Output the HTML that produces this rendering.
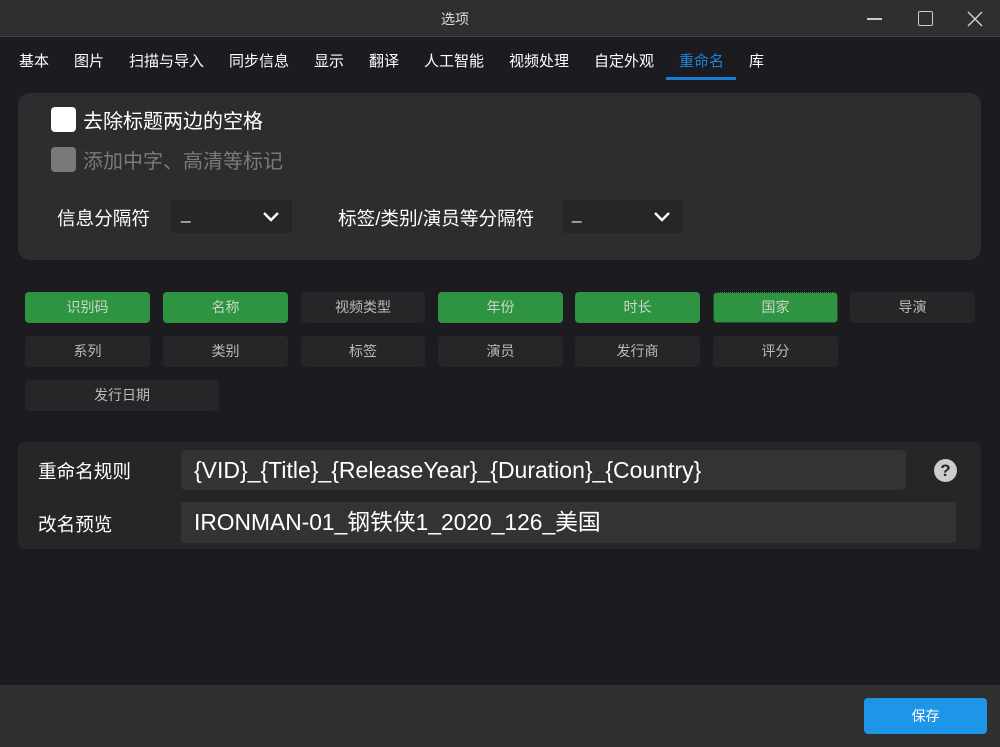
<!DOCTYPE html>
<html><head><meta charset="utf-8"><style>
*{margin:0;padding:0;box-sizing:border-box}
body{width:1000px;height:747px;background:#1c1b20;font-family:"Liberation Sans","Noto Sans CJK SC",sans-serif;color:#fff;position:relative;overflow:hidden}
.a{position:absolute}
.title{left:0;top:0;width:1000px;height:37px;background:#2f2f2f;border-bottom:1px solid #444}
.tab{top:50px;font-size:15px;color:#fff}
.btn{position:absolute;height:31px;border-radius:4px;background:#262628;color:#bbb;font-size:14px;text-align:center;line-height:31px}
.g{background:#2e9442;color:#c8d8c8}
.sel{background:#262628;height:33px;top:200px}
.chev{position:absolute;right:12px;top:11px}
</style></head><body>
<div class="a title"></div>
<div class="a" style="left:441px;top:9px;font-size:14px;color:#ddd">选项</div>
<div class="a" style="left:867px;top:18px;width:15px;height:1.5px;background:#ccc"></div>
<div class="a" style="left:918px;top:11px;width:15px;height:15px;border:1.5px solid #ccc;border-radius:2px"></div>
<svg class="a" style="left:966px;top:10px" width="18" height="18"><path d="M2 2L16 16M16 2L2 16" stroke="#ccc" stroke-width="1.5"/></svg>

<div class="a tab" style="left:19px">基本</div>
<div class="a tab" style="left:74px">图片</div>
<div class="a tab" style="left:129px">扫描与导入</div>
<div class="a tab" style="left:229px">同步信息</div>
<div class="a tab" style="left:314px">显示</div>
<div class="a tab" style="left:369px">翻译</div>
<div class="a tab" style="left:424px">人工智能</div>
<div class="a tab" style="left:509px">视频处理</div>
<div class="a tab" style="left:594px">自定外观</div>
<div class="a tab" style="left:679px;color:#1a86d9">重命名</div>
<div class="a tab" style="left:749px">库</div>
<div class="a" style="left:666px;top:77px;width:70px;height:3px;background:#1a7bd0"></div>

<div class="a" style="left:18px;top:93px;width:963px;height:167px;background:#2d2d30;border-radius:12px"></div>
<div class="a" style="left:51px;top:107px;width:25px;height:25px;background:#fff;border-radius:4px"></div>
<div class="a" style="left:83px;top:105px;font-size:20px">去除标题两边的空格</div>
<div class="a" style="left:51px;top:147px;width:25px;height:25px;background:#7a7a7a;border-radius:4px"></div>
<div class="a" style="left:83px;top:145px;font-size:20px;color:#7a7a7a">添加中字、高清等标记</div>
<div class="a" style="left:57px;top:204px;font-size:18.6px">信息分隔符</div>
<div class="a sel" style="left:171px;width:121px"><span class="a" style="left:10px;top:4px;font-size:17px">_</span><svg class="chev" width="18" height="12"><path d="M2 2L9 9L16 2" stroke="#fff" stroke-width="2.4" fill="none"/></svg></div>
<div class="a" style="left:338px;top:204px;font-size:18.6px">标签/类别/演员等分隔符</div>
<div class="a sel" style="left:562px;width:121px"><span class="a" style="left:10px;top:4px;font-size:17px">_</span><svg class="chev" width="18" height="12"><path d="M2 2L9 9L16 2" stroke="#fff" stroke-width="2.4" fill="none"/></svg></div>

<div class="btn g" style="left:25px;top:292px;width:125px">识别码</div>
<div class="btn g" style="left:163px;top:292px;width:125px">名称</div>
<div class="btn" style="left:301px;top:292px;width:124px">视频类型</div>
<div class="btn g" style="left:438px;top:292px;width:125px">年份</div>
<div class="btn g" style="left:575px;top:292px;width:125px">时长</div>
<div class="btn g" style="left:713px;top:292px;width:125px;border:1px dotted #111;line-height:29px">国家</div>
<div class="btn" style="left:850px;top:292px;width:125px">导演</div>
<div class="btn" style="left:25px;top:336px;width:125px">系列</div>
<div class="btn" style="left:163px;top:336px;width:125px">类别</div>
<div class="btn" style="left:301px;top:336px;width:124px">标签</div>
<div class="btn" style="left:438px;top:336px;width:125px">演员</div>
<div class="btn" style="left:575px;top:336px;width:125px">发行商</div>
<div class="btn" style="left:713px;top:336px;width:125px">评分</div>
<div class="btn" style="left:25px;top:380px;width:194px">发行日期</div>

<div class="a" style="left:18px;top:442px;width:963px;height:107px;background:#262629;border-radius:6px"></div>
<div class="a" style="left:38px;top:457px;font-size:18.6px">重命名规则</div>
<div class="a" style="left:181px;top:450px;width:725px;height:40px;background:#333336;border-radius:4px;font-size:23px;line-height:40px;padding-left:13px">{VID}_{Title}_{ReleaseYear}_{Duration}_{Country}</div>
<div class="a" style="left:934px;top:459px;width:23px;height:23px;border-radius:50%;background:#ccc;color:#262629;font-size:17px;font-weight:bold;text-align:center;line-height:23px">?</div>
<div class="a" style="left:38px;top:510px;font-size:18.6px">改名预览</div>
<div class="a" style="left:181px;top:502px;width:775px;height:41px;background:#333336;font-size:22.8px;line-height:41px;padding-left:13px">IRONMAN-01_钢铁侠1_2020_126_美国</div>

<div class="a" style="left:0;top:685px;width:1000px;height:62px;background:#2f2f2f"></div>
<div class="a" style="left:864px;top:698px;width:123px;height:36px;background:#1e96e8;border-radius:4px;font-size:14px;text-align:center;line-height:36px">保存</div>
</body></html>
